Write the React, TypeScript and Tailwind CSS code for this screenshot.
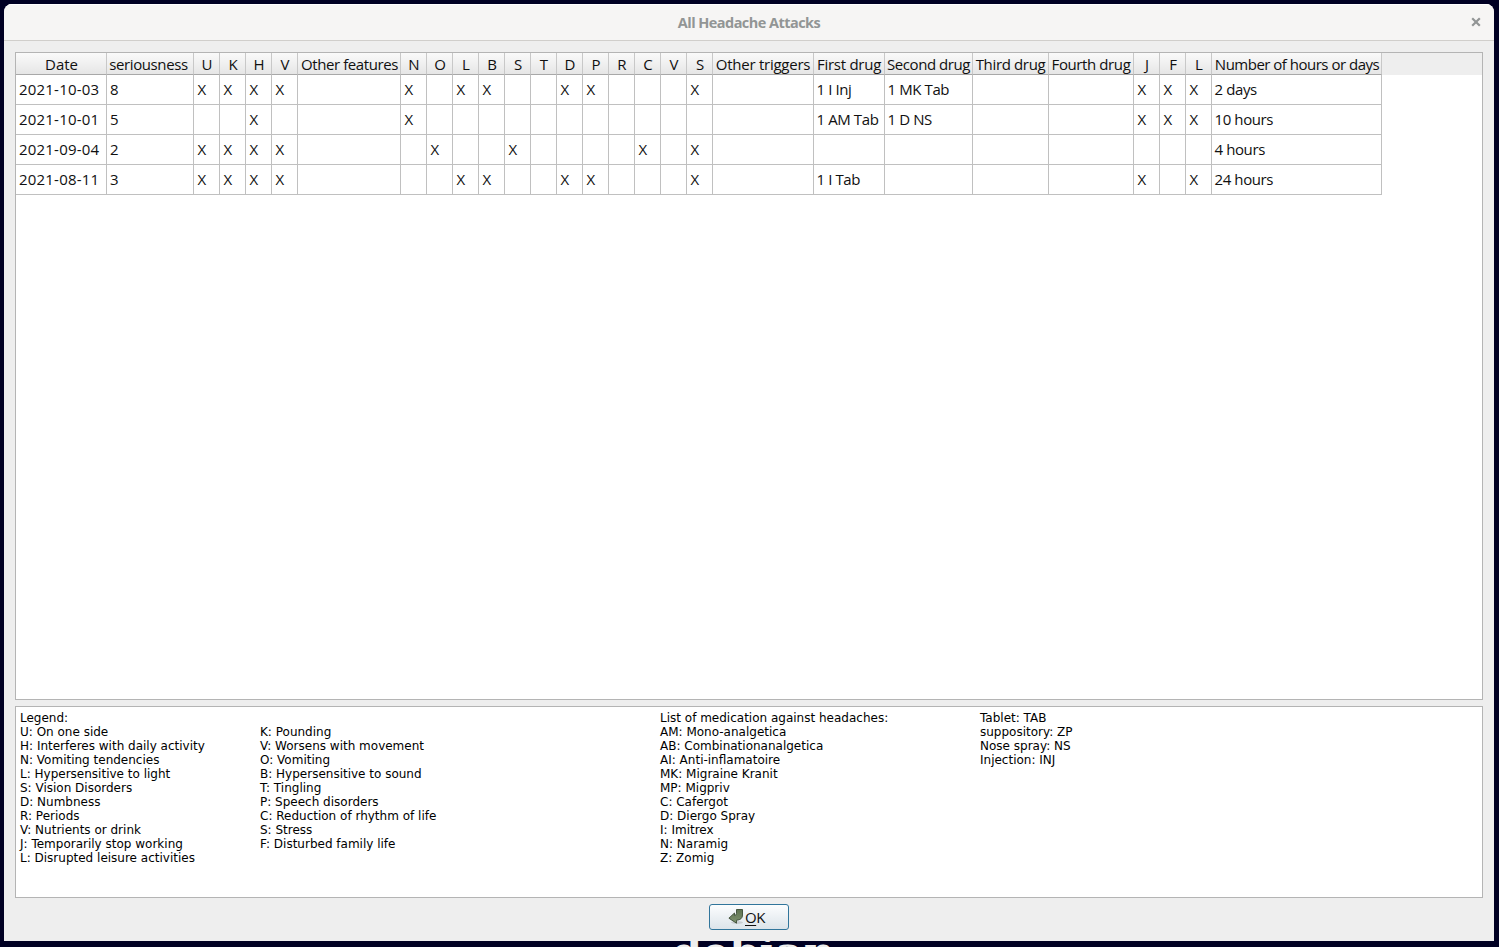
import type { ReactNode } from "react";

type Column = { title: string; width: string; tracking: string };

const flag = (title: string): Column => ({ title, width: "w-[26px]", tracking: "pl-px" });

const columns: Column[] = [
  { title: "Date", width: "w-[91px]", tracking: "pl-px" },
  { title: "seriousness", width: "w-[87px]", tracking: "pr-[3px] tracking-[-0.4px]" },
  ...["U", "K", "H", "V"].map(flag),
  { title: "Other features", width: "w-[103px]", tracking: "pl-px tracking-[-0.42px]" },
  ...["N", "O", "L", "B", "S", "T", "D", "P", "R", "C", "V", "S"].map(flag),
  { title: "Other triggers", width: "w-[101px]", tracking: "tracking-[-0.25px]" },
  { title: "First drug", width: "w-[71px]", tracking: "tracking-[-0.25px]" },
  { title: "Second drug", width: "w-[88px]", tracking: "tracking-[-0.45px]" },
  { title: "Third drug", width: "w-[76px]", tracking: "tracking-[-0.35px]" },
  { title: "Fourth drug", width: "w-[85px]", tracking: "tracking-[-0.4px]" },
  ...["J", "F", "L"].map(flag),
  { title: "Number of hours or days", width: "w-[170px]", tracking: "pl-px tracking-[-0.5px]" },
];

const rows: string[][] = [
  ["2021-10-03", "8", "X", "X", "X", "X", "", "X", "", "X", "X", "", "", "X", "X", "", "", "", "X", "", "1 I Inj", "1 MK Tab", "", "", "X", "X", "X", "2 days"],
  ["2021-10-01", "5", "", "", "X", "", "", "X", "", "", "", "", "", "", "", "", "", "", "", "", "1 AM Tab", "1 D NS", "", "", "X", "X", "X", "10 hours"],
  ["2021-09-04", "2", "X", "X", "X", "X", "", "", "X", "", "", "X", "", "", "", "", "X", "", "X", "", "", "", "", "", "", "", "", "4 hours"],
  ["2021-08-11", "3", "X", "X", "X", "X", "", "", "", "X", "X", "", "", "X", "X", "", "", "", "X", "", "1 I Tab", "", "", "", "X", "", "X", "24 hours"],
];

const legend: { width: string; lines: string[] }[] = [
  {
    width: "w-[240px]",
    lines: ["Legend:", "U: On one side", "H: Interferes with daily activity", "N: Vomiting tendencies", "L: Hypersensitive to light", "S: Vision Disorders", "D: Numbness", "R: Periods", "V: Nutrients or drink", "J: Temporarily stop working", "L: Disrupted leisure activities"],
  },
  {
    width: "w-[400px]",
    lines: ["", "K: Pounding", "V: Worsens with movement", "O: Vomiting", "B: Hypersensitive to sound", "T: Tingling", "P: Speech disorders", "C: Reduction of rhythm of life", "S: Stress", "F: Disturbed family life"],
  },
  {
    width: "w-[320px]",
    lines: ["List of medication against headaches:", "AM: Mono-analgetica", "AB: Combinationanalgetica", "AI: Anti-inflamatoire", "MK: Migraine Kranit", "MP: Migpriv", "C: Cafergot", "D: Diergo Spray", "I: Imitrex", "N: Naramig", "Z: Zomig"],
  },
  { width: "w-[200px]", lines: ["Tablet: TAB", "suppository: ZP", "Nose spray: NS", "Injection: INJ"] },
];

function cellStyle(value: string) {
  if (value === "X") return "pl-[3.5px]";
  if (value.startsWith("2021")) return "pl-[3px] tracking-[0.2px]";
  return value.length > 1 ? "pl-[2.5px] tracking-[-0.4px]" : "pl-[3px]";
}

function Cell({ width, style, children }: { width: string; style: string; children: ReactNode }) {
  return (
    <div className={`${width} ${style} h-[30px] shrink-0 border-r border-b border-[#c0c0c0] leading-[29px]`}>
      {children}
    </div>
  );
}

export default function App() {
  return (
    <div className="flex h-[947px] w-[1499px] flex-col overflow-hidden bg-[#000023] pt-1 pr-[5px] pl-1 font-['Open_Sans',sans-serif] text-[15px] text-[#101010]">
      <div className="z-10 flex h-[937px] shrink-0 flex-col overflow-hidden rounded-t-[8px] bg-[#eeeeee]">
        <header className="grid h-[37px] shrink-0 grid-cols-[1fr_auto_1fr] items-center border-b border-[#d0cecb] bg-[#f6f5f4] shadow-[inset_0_1px_#fff]">
          <span />
          <h1 className="pt-[2px] text-[14.5px] font-bold tracking-[-0.55px] text-[#929595]">All Headache Attacks</h1>
          <svg className="mr-[13px] size-[10px] justify-self-end" viewBox="0 0 10 10" stroke="#929595" strokeWidth="2.2">
            <path d="M1.200 1.200l7.600 7.600M8.800 1.200l-7.600 7.600" />
          </svg>
        </header>
        <main className="flex flex-col px-[11px] pt-[11px]">
          <section className="h-[648px] w-[1468px] border border-[#b4b4b4] bg-white whitespace-nowrap">
            <div className="flex h-[22px] bg-[#eeeeee]">
              {columns.map((c, i) => (
                <div key={i} className={`${c.width} flex shrink-0 justify-center border-r border-b border-r-[#c8c8c8] border-b-[#a8a8a8] bg-linear-to-b from-[#fafafa] to-[#e6e6e6] leading-[23px]`}>
                  <span className={c.tracking}>{c.title}</span>
                </div>
              ))}
            </div>
            {rows.map((r) => (
              <div key={r[0]} className="flex">
                {r.map((v, i) => (
                  <Cell key={i} width={columns[i].width} style={cellStyle(v)}>{v}</Cell>
                ))}
              </div>
            ))}
          </section>
          <section className="mt-[6px] flex h-[192px] w-[1468px] border border-[#b4b4b4] bg-white pt-1 pl-1 font-['DejaVu_Sans',sans-serif] text-[12px] leading-[14px] text-black">
            {legend.map((col, i) => (
              <div key={i} className={`${col.width} shrink-0`}>
                {col.lines.map((l, j) => (
                  <p key={j} className="h-[14px] whitespace-nowrap">{l}</p>
                ))}
              </div>
            ))}
          </section>
          <button className="mt-[6px] ml-[694px] flex h-[26px] w-[80px] items-center rounded-[3px] border border-[#31759b] bg-linear-to-b from-[#fcfdfe] to-[#dce4ea] pl-[18px]">
            <svg className="mr-px mb-[2px] h-[17px] w-[16px] shrink-0" viewBox="0 0 16 17">
              <defs>
                <linearGradient id="arrow" x1="0" y1="0" x2="0" y2="1">
                  <stop offset="0" stopColor="#5f7351" />
                  <stop offset="1" stopColor="#7f9470" />
                </linearGradient>
              </defs>
              <ellipse cx="9" cy="14.500" rx="6" ry="1.500" fill="#000" opacity=".12" />
              <path d="M8.500 1.500h6V7q0 4.800-6 5.200v3L.9 10.200 6.500 5v2.500q2 0 2-2.200z" fill="url(#arrow)" stroke="#46563f" />
            </svg>
            <span className="tracking-[-0.5px]">
              <span className="underline decoration-1 underline-offset-2">O</span>K
            </span>
          </button>
        </main>
      </div>
      <div className="ml-[668px] h-[6px] shrink-0 overflow-hidden font-['DejaVu_Serif',serif] text-[43px] font-bold text-[#eeeeee]">
        <p className="-mt-[19px] leading-[60px]">debian</p>
      </div>
    </div>
  );
}
